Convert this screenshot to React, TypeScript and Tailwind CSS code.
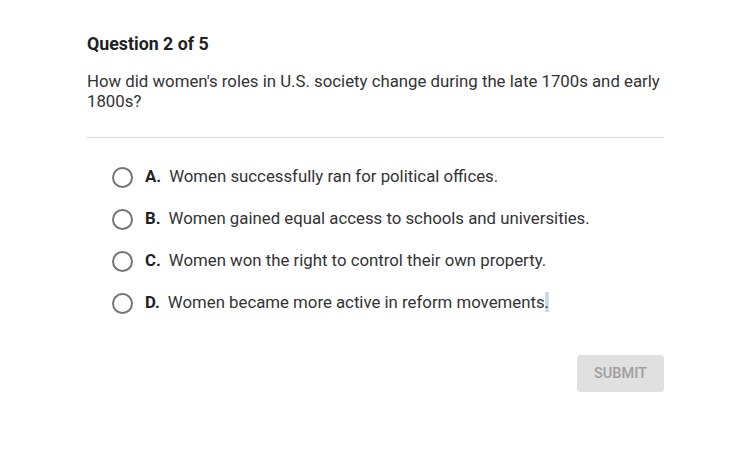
const OPTIONS = [
  { letter: 'A.', text: 'Women successfully ran for political offices.' },
  { letter: 'B.', text: 'Women gained equal access to schools and universities.' },
  { letter: 'C.', text: 'Women won the right to control their own property.' },
  { letter: 'D.', text: 'Women became more active in reform movements' },
];

export default function App() {
  return (
    <div className="w-[754px] h-[459px] bg-white text-[#212121]" style={{ fontFamily: 'Roboto, "Liberation Sans", sans-serif' }}>
      <div className="ml-[87px] w-[577px] pt-[33px]">
        <h1 className="text-[17.8px] font-bold leading-[22px]">Question 2 of 5</h1>
        <p className="mt-[16px] text-[16.8px] leading-[20px] text-[#333]">
          How did women's roles in U.S. society change during the late 1700s and early 1800s?
        </p>
        <div className="mt-[26px] h-px bg-[#d6d6d6]" />
        <div className="mt-[28px] flex flex-col gap-[20px] pl-[25px]">
          {OPTIONS.map((o, i) => (
            <label key={o.letter} className="flex items-center h-[22px]">
              <span className="w-[21px] h-[21px] rounded-full border-2 border-[#757575] shrink-0" />
              <span className="ml-[12px] text-[16.8px] font-bold text-[#222]">{o.letter}</span>
              <span className="ml-[8px] text-[16.8px] text-[#333]">
                {o.text}
                {i === 3 && <span className="bg-[#c7dbf2]">.</span>}
              </span>
            </label>
          ))}
        </div>
        <div className="mt-[41px] flex justify-end">
          <button className="w-[87px] h-[37px] rounded-[4px] bg-[#e0e0e0] text-[#9e9e9e] text-[14.5px] font-medium uppercase">
            Submit
          </button>
        </div>
      </div>
    </div>
  );
}
